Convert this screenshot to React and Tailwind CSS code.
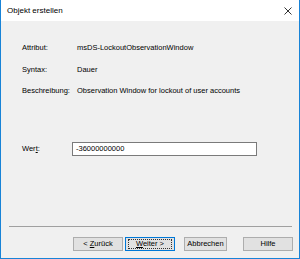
import React from 'react';

const font = { fontFamily: '"Liberation Sans", Arial, sans-serif' };

const Row = ({ label, value, className = '' }) => (
  <div className={`flex items-center h-[12px] ${className}`}>
    <span className="w-[55px] shrink-0">{label}</span>
    <span>{value}</span>
  </div>
);

const Button = ({ children, focused = false, className = '' }) => (
  <div
    className={`h-[14px] flex items-center justify-center bg-[#e1e1e1] border ${
      focused ? 'border-[#0078d7]' : 'border-[#adadad]'
    } ${className}`}
  >
    {focused ? (
      <div className="w-[calc(100%-4px)] h-[10px] flex items-center justify-center border border-dotted border-[#333]">
        <span>{children}</span>
      </div>
    ) : (
      <span>{children}</span>
    )}
  </div>
);

export default function App() {
  return (
    <div
      className="w-[300px] h-[259px] flex flex-col border-x border-b border-[#1883d7] text-[7.5px] text-black overflow-hidden"
      style={font}
    >
      {/* title bar */}
      <div className="h-[21px] shrink-0 bg-white flex items-center justify-between pl-[6px] pr-[7px]">
        <span className="text-[8px]">Objekt erstellen</span>
        <svg width="8" height="8" viewBox="0 0 8 8" className="text-[#333]">
          <path d="M0.5 0.5 L7.5 7.5 M7.5 0.5 L0.5 7.5" stroke="currentColor" strokeWidth="1" />
        </svg>
      </div>

      {/* body */}
      <div className="flex-1 bg-[#f0f0f0] flex flex-col pl-[21px] pt-[21px]">
        <Row label="Attribut:" value="msDS-LockoutObservationWindow" />
        <Row label="Syntax:" value="Dauer" className="mt-[10px]" />
        <Row label="Beschreibung:" value="Observation Window for lockout of user accounts" className="mt-[9px]" />

        <div className="flex items-center mt-[45px]">
          <span className="w-[50px] shrink-0">
            Wer<span className="underline">t</span>:
          </span>
          <div className="w-[185px] h-[14px] bg-white border border-[#7a7a7a] flex items-center pl-[3px]">
            -36000000000
          </div>
        </div>

        <div className="mt-[70px] -ml-[13px] mr-[7px] h-px bg-[#a0a0a0]" />

        <div className="flex mt-[10px] -ml-[21px]">
          <Button className="ml-[72px] w-[50px]">
            &lt; <span className="underline">Z</span>urück
          </Button>
          <Button focused className="ml-[2px] w-[50px]">
            <span className="underline">W</span>eiter &gt;
          </Button>
          <Button className="ml-[9px] w-[43px]">Abbrechen</Button>
          <Button className="ml-[16px] w-[50px]">Hilfe</Button>
        </div>
      </div>
    </div>
  );
}
